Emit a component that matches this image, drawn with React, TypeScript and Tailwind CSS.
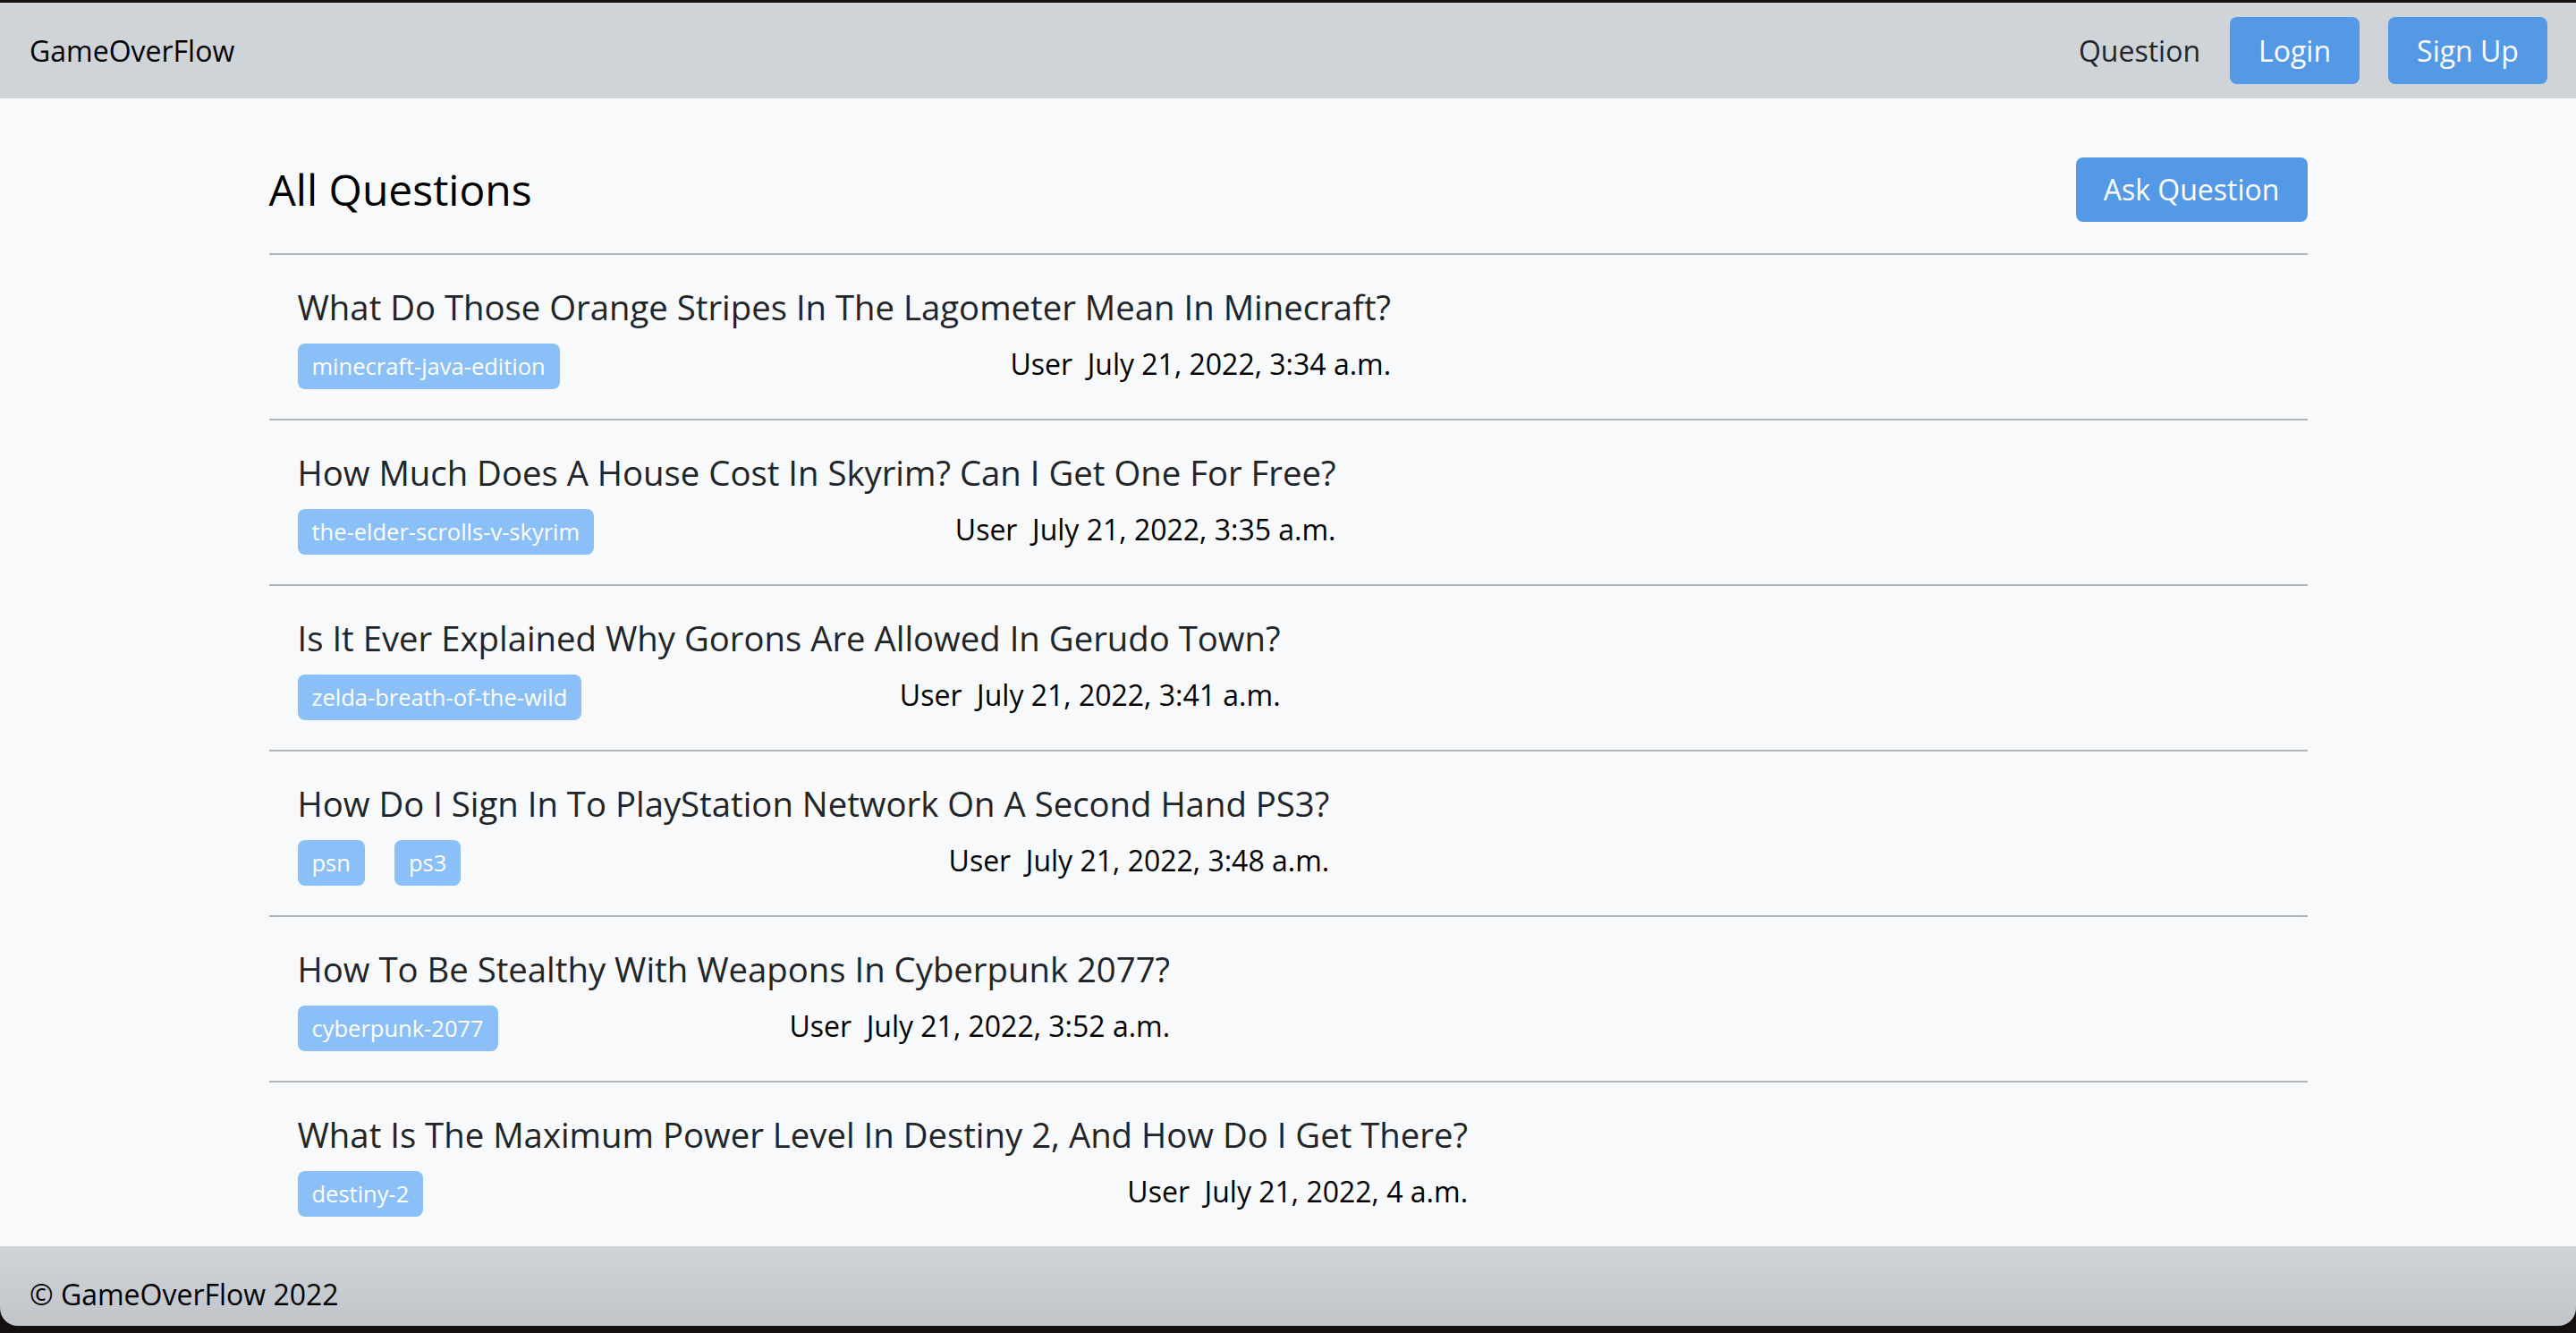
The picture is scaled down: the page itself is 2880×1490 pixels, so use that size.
import React from 'react';

type Question = {
  title: string;
  tags: string[];
  date: string;
};

const questions: Question[] = [
  {
    title: 'What Do Those Orange Stripes In The Lagometer Mean In Minecraft?',
    tags: ['minecraft-java-edition'],
    date: 'July 21, 2022, 3:34 a.m.',
  },
  {
    title: 'How Much Does A House Cost In Skyrim? Can I Get One For Free?',
    tags: ['the-elder-scrolls-v-skyrim'],
    date: 'July 21, 2022, 3:35 a.m.',
  },
  {
    title: 'Is It Ever Explained Why Gorons Are Allowed In Gerudo Town?',
    tags: ['zelda-breath-of-the-wild'],
    date: 'July 21, 2022, 3:41 a.m.',
  },
  {
    title: 'How Do I Sign In To PlayStation Network On A Second Hand PS3?',
    tags: ['psn', 'ps3'],
    date: 'July 21, 2022, 3:48 a.m.',
  },
  {
    title: 'How To Be Stealthy With Weapons In Cyberpunk 2077?',
    tags: ['cyberpunk-2077'],
    date: 'July 21, 2022, 3:52 a.m.',
  },
  {
    title: 'What Is The Maximum Power Level In Destiny 2, And How Do I Get There?',
    tags: ['destiny-2'],
    date: 'July 21, 2022, 4 a.m.',
  },
];

const NavBar = () => {
  return (
    <nav className="flex h-[107px] shrink-0 items-center justify-between bg-[#cfd4d9] pl-[33px] pr-[32px]">
      <a href="#" className="text-[32px] text-black">
        GameOverFlow
      </a>
      <div className="flex items-center">
        <a href="#" className="mr-[33px] text-[32px] text-[#222529]">
          Question
        </a>
        <button className="mr-[32px] h-[75px] w-[145px] rounded-[8px] bg-[#5399e6] text-[32px] text-white">
          Login
        </button>
        <button className="h-[75px] w-[178px] rounded-[8px] bg-[#5399e6] text-[32px] text-white">
          Sign Up
        </button>
      </div>
    </nav>
  );
};

const QuestionItem = ({ q }: { q: Question }) => {
  return (
    <li className="border-t-2 border-[#b1b6bb] pl-[32px] pt-[34px] pb-[33px] last:border-b-2">
      <div className="inline-flex flex-col">
        <h5 className="text-[38.3px] leading-[48px] text-[#212529]">{q.title}</h5>
        <div className="mt-[17px] flex h-[51px] items-center justify-between">
          <div className="flex gap-[33px]">
            {q.tags.map((tag) => (
              <span
                key={tag}
                className="flex h-[51px] items-center rounded-[8px] bg-[#8abff7] px-[16px] text-[25.5px] text-white"
              >
                {tag}
              </span>
            ))}
          </div>
          <span className="mb-[6px] text-[32px] leading-[40px] text-black whitespace-pre">{'User  ' + q.date}</span>
        </div>
      </div>
    </li>
  );
};

export default function App() {
  return (
    <div
      className="flex h-[1490px] flex-col bg-[#141010] pt-[3px] pb-[8px]"
      style={{ fontFamily: '"Open Sans", "Noto Sans", sans-serif' }}
    >
      <div className="flex flex-1 flex-col overflow-hidden rounded-b-[20px]">
        <NavBar />
        <main className="flex-1 overflow-hidden bg-[#f8f9fa]">
          <div className="mx-auto w-[2279px]">
            <div className="flex items-center justify-between pt-[66px] pb-[35px]">
              <h3 className="text-[48px] text-black">All Questions</h3>
              <button className="h-[72px] w-[259px] rounded-[8px] bg-[#5399e6] text-[32px] text-white">
                Ask Question
              </button>
            </div>
            <ul>
              {questions.map((q) => (
                <QuestionItem key={q.title} q={q} />
              ))}
            </ul>
          </div>
        </main>
        <footer className="h-[89px] shrink-0 bg-gradient-to-b from-[#cfd4d9] to-[#c1c5ca] pl-[33px] pt-[32px] text-[32px] leading-[44px] text-black">
          © GameOverFlow 2022
        </footer>
      </div>
    </div>
  );
}
